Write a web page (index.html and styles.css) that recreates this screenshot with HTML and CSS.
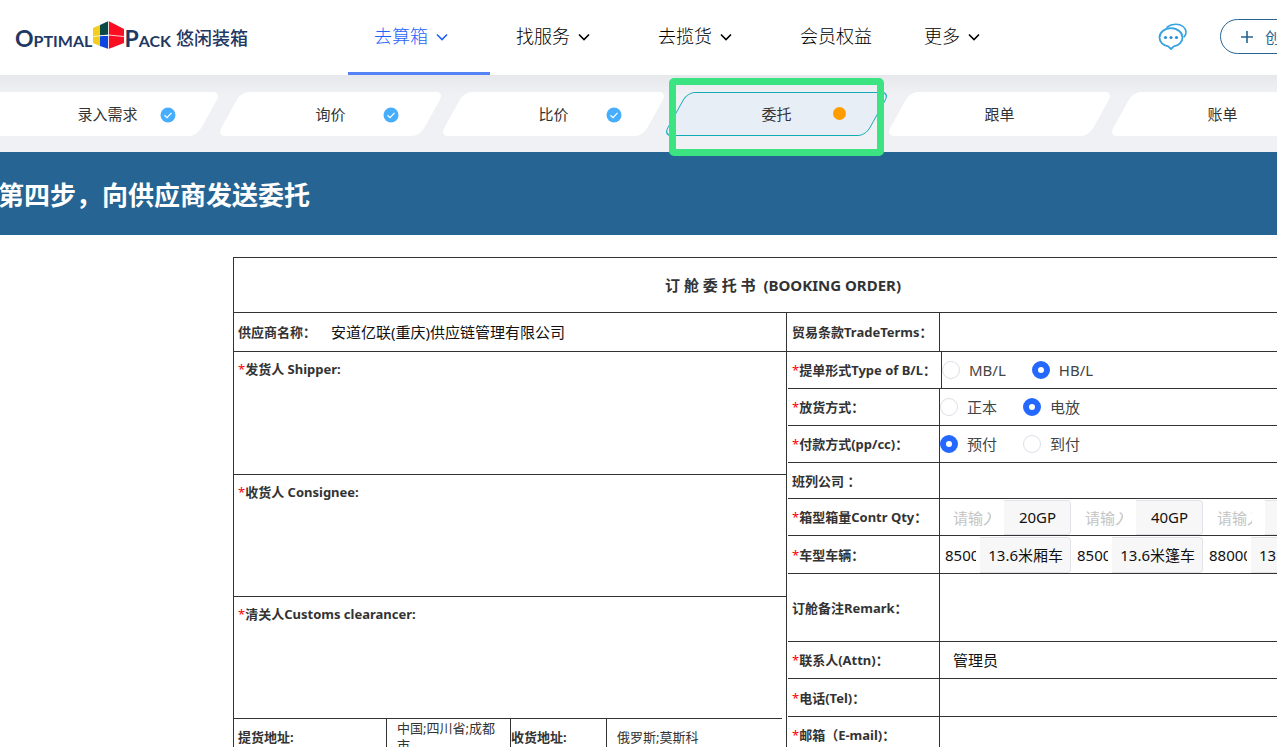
FILE: index.html
```html
<!DOCTYPE html>
<html lang="zh-CN">
<head>
<meta charset="utf-8">
<title>悠闲装箱</title>
<link rel="stylesheet" href="styles.css">
</head>
<body>
<header class="header">
  <a class="logo" href="#">
    <span class="logo-latin">Optimal</span>
    <svg class="logo-mark" viewBox="0 0 31 28" aria-hidden="true">
      <path fill="#f5cd1c" d="M0 7l7-3v21l-7-3z"/>
      <path fill="#0b4a45" d="M7 4l8.500-4v14L7 14.500z"/>
      <path fill="#0c46de" d="M7 15h8.500v13L7 25z"/>
      <path fill="#fb0d22" d="M15.500 0L31 8v14l-15.500 6z"/>
      <path fill="none" stroke="#fff" stroke-width=".8" d="M0 15.500l15.500-1.500L31 15.500M15.500 0v28"/>
    </svg>
    <span class="logo-latin">Pack</span>
    <span class="logo-cn">悠闲装箱</span>
  </a>
  <nav class="nav">
    <a class="nav-item active" href="#">去算箱<svg class="chevron" viewBox="0 0 12 8"><path d="M1 1.500l5 5 5-5"/></svg></a>
    <a class="nav-item" href="#">找服务<svg class="chevron" viewBox="0 0 12 8"><path d="M1 1.500l5 5 5-5"/></svg></a>
    <a class="nav-item" href="#">去揽货<svg class="chevron" viewBox="0 0 12 8"><path d="M1 1.500l5 5 5-5"/></svg></a>
    <a class="nav-item" href="#">会员权益</a>
    <a class="nav-item" href="#">更多<svg class="chevron" viewBox="0 0 12 8"><path d="M1 1.500l5 5 5-5"/></svg></a>
  </nav>
  <div class="actions">
    <svg class="chat" viewBox="0 0 30 28" aria-hidden="true">
      <path fill="none" stroke="#36a3e0" stroke-width="1.600" stroke-linecap="round" d="M9 4.200C14 .500 21 .300 25 3.500c3.800 3 3.700 7.500 1.200 10.300"/>
      <path fill="none" stroke="#36a3e0" stroke-width="1.800" stroke-linejoin="round" d="M13 5.200c6.600 0 11.500 4.200 11.500 9.300 0 4.500-3.700 8-8.700 8.900L13 26l-2.800-2.600C5.200 22.500 1.500 19 1.500 14.500c0-5.100 4.900-9.300 11.500-9.300z"/>
      <g fill="#2a8fd6"><circle cx="7.500" cy="14.500" r="1.600"/><circle cx="13" cy="14.500" r="1.600"/><circle cx="18.500" cy="14.500" r="1.600"/></g>
    </svg>
    <button class="create" type="button"><svg class="plus" viewBox="0 0 12 12"><path d="M6 0v12M0 6h12"/></svg>创</button>
  </div>
</header>

<ol class="steps">
  <li class="step"><span class="step-text">录入需求</span><svg class="state" viewBox="0 0 16 16"><circle cx="8" cy="8" r="7.500"/><path d="M4.500 8.200l2.500 2.400 4.500-4.800"/></svg></li>
  <li class="step"><span class="step-text">询价</span><svg class="state" viewBox="0 0 16 16"><circle cx="8" cy="8" r="7.500"/><path d="M4.500 8.200l2.500 2.400 4.500-4.800"/></svg></li>
  <li class="step"><span class="step-text">比价</span><svg class="state" viewBox="0 0 16 16"><circle cx="8" cy="8" r="7.500"/><path d="M4.500 8.200l2.500 2.400 4.500-4.800"/></svg></li>
  <li class="step current"><span class="step-text">委托</span><span class="dot"></span><span class="highlight"></span></li>
  <li class="step"><span class="step-text">跟单</span></li>
  <li class="step"><span class="step-text">账单</span></li>
</ol>

<h1 class="banner">第四步，向供应商发送委托</h1>

<form class="order">
  <h2 class="order-title">订 舱 委 托 书&nbsp; (BOOKING ORDER)</h2>
  <div class="columns">
    <div class="left">
      <div class="supplier">
        <span class="label">供应商名称：</span>
        <span class="supplier-name">安道亿联(重庆)供应链管理有限公司</span>
      </div>
      <div class="party first"><label class="label" for="shipper"><i>*</i>发货人 Shipper:</label><textarea id="shipper"></textarea></div>
      <div class="party"><label class="label" for="consignee"><i>*</i>收货人 Consignee:</label><textarea id="consignee"></textarea></div>
      <div class="party last"><label class="label" for="customs"><i>*</i>清关人Customs clearancer:</label><textarea id="customs"></textarea></div>
      <div class="addresses">
        <div class="label addr-label">提货地址:</div>
        <div class="addr-value">中国;四川省;成都市</div>
        <div class="label addr-label tight">收货地址:</div>
        <div class="addr-value">俄罗斯;莫斯科</div>
      </div>
    </div>
    <div class="right">
      <div class="row terms"><label class="label" for="terms">贸易条款TradeTerms：</label><div class="field"><input class="text" id="terms"></div></div>
      <div class="rows">
        <div class="row bill"><span class="label"><i>*</i>提单形式Type of B/L：</span><div class="field radios">
          <label class="choice"><input type="radio" name="bl">MB/L</label>
          <label class="choice"><input type="radio" name="bl" checked>HB/L</label></div></div>
        <div class="row"><span class="label"><i>*</i>放货方式：</span><div class="field radios">
          <label class="choice"><input type="radio" name="release">正本</label>
          <label class="choice"><input type="radio" name="release" checked>电放</label></div></div>
        <div class="row"><span class="label"><i>*</i>付款方式(pp/cc)：</span><div class="field radios">
          <label class="choice"><input type="radio" name="pay" checked>预付</label>
          <label class="choice"><input type="radio" name="pay">到付</label></div></div>
        <div class="row short"><label class="label" for="carrier">班列公司 ：</label><div class="field"><input class="text" id="carrier"></div></div>
        <div class="row"><span class="label"><i>*</i>箱型箱量Contr Qty：</span><div class="field groups">
          <label class="group"><input placeholder="请输入"><span class="unit">20GP</span></label>
          <label class="group"><input placeholder="请输入"><span class="unit">40GP</span></label>
          <label class="group"><input placeholder="请输入"><span class="unit wide"></span></label></div></div>
        <div class="row high"><span class="label"><i>*</i>车型车辆：</span><div class="field groups trucks">
          <label class="group"><input value="85000"><span class="unit">13.6米厢车</span></label>
          <label class="group"><input value="85000"><span class="unit">13.6米篷车</span></label>
          <label class="group"><input value="88000"><span class="unit wide">13.6米</span></label></div></div>
        <div class="row tall"><label class="label" for="remark">订舱备注Remark：</label><div class="field"><input class="text" id="remark"></div></div>
        <div class="row"><label class="label" for="attn"><i>*</i>联系人(Attn)：</label><div class="field"><input class="text" id="attn" value="管理员"></div></div>
        <div class="row high"><label class="label" for="tel"><i>*</i>电话(Tel)：</label><div class="field"><input class="text" id="tel"></div></div>
        <div class="row"><label class="label" for="email"><i>*</i>邮箱（E-mail)：</label><div class="field"><input class="text" id="email"></div></div>
      </div>
    </div>
  </div>
</form>
</body>
</html>
```
FILE: styles.css
```css
* { box-sizing: border-box; }
body {
  margin: 0;
  overflow: hidden;
  background: #fff;
  color: #333;
  font: 15px/20px "Noto Sans", "Noto Sans CJK SC", sans-serif;
}
a { color: inherit; text-decoration: none; }
input, textarea, button { font: inherit; color: inherit; }
h1, h2 { margin: 0; }

.header { display: flex; align-items: center; height: 75px; padding-left: 15px; }
.logo { display: flex; align-items: center; width: 333px; flex: none; color: #1f3864; }
.logo-latin { font: 700 23px/28px Lato, sans-serif; font-variant: small-caps; }
.logo-mark { width: 31px; height: 28px; margin: -6px 0 0 1px; }
.logo-cn { margin-left: 5px; font-size: 18px; font-weight: 500; }
.nav { display: flex; align-self: stretch; flex: none; color: #000; font-size: 18px; font-weight: 300; }
.nav-item { display: flex; align-items: center; padding: 0 26px; border-bottom: 3px solid transparent; }
.nav-item.active { color: #1f62fb; border-color: #5583f6; }
.chevron { width: 12px; height: 8px; margin: 2px 16px 0 8px; fill: none; stroke: currentColor; stroke-width: 1.6; }
.actions { display: flex; align-items: center; gap: 32px; margin-left: auto; padding-bottom: 2px; flex: none; width: 119px; }
.chat { width: 30px; height: 28px; flex: none; }
.create {
  display: flex; align-items: center; gap: 12px; flex: none;
  width: 130px; height: 35px; padding: 0 20px;
  border: 1px solid #266493; border-radius: 18px;
  background: #fff; color: #266493;
}
.plus { width: 12px; height: 12px; stroke: currentColor; stroke-width: 1.6; }

.steps {
  display: flex; margin: 0; padding: 17px 0 16px; list-style: none;
  background: linear-gradient(#e7e8ec, #f0f1f5 20px);
}
.step {
  position: relative; z-index: 0; flex: none;
  display: grid; place-items: center;
  width: 223px; height: 44px;
}
.step:first-child { margin-left: -4px; }
.step::before {
  content: ""; position: absolute; z-index: -1; inset: 0 10px;
  border-radius: 8px; background: #fff; transform: skewX(-29deg);
}
.step:first-child::before { left: -30px; }
.step.current { z-index: 1; }
.step.current::before { background: #e7eef6; border: 1px solid #12acb9; }
.step-text { color: #333; }
.state, .dot { position: absolute; top: 15px; right: 43px; width: 16px; height: 16px; }
.state circle { fill: #47aefe; }
.state path { fill: none; stroke: #fff; stroke-width: 1.2; }
.dot { right: 42px; width: 13px; height: 13px; border-radius: 50%; background: #ff9d00; }
.highlight { position: absolute; inset: -14px 4px -20px; border: 7px solid #3be381; border-radius: 5px; }

.banner { padding: 23px 0 20px; background: #266493; color: #fff; font-size: 26px; line-height: 40px; text-indent: -2px; }

.order { width: 1100px; margin: 22px 0 0 233px; border: 1px solid #333; }
.order-title { padding: 17px 0; border-bottom: 1px solid #333; text-align: center; font-size: 15px; line-height: 20px; }
.columns { display: flex; }
.left { width: 553px; border-right: 1px solid #333; }
.right { flex: 1; min-width: 0; }
.label { font-size: 13px; font-weight: 700; line-height: 20px; white-space: nowrap; }
.label i { color: #f00; font-weight: 400; font-style: normal; }

.supplier { display: flex; align-items: center; height: 39px; padding: 0 4px; border-bottom: 1px solid #333; }
.supplier-name { margin-left: 15px; color: #111; }
.party { display: flex; flex-direction: column; height: 122px; padding: 7px 4px; border-bottom: 1px solid #333; }
.party.first { height: 123px; }
.party.last { margin-right: 4px; }
.party textarea { flex: 1; border: 0; resize: none; outline: 0; background: none; }
.addresses { display: grid; grid-template-columns: 153px 124px 96px 1fr; min-height: 36px; }
.addr-label { display: flex; align-items: center; padding-left: 4px; border-right: 1px solid #333; }
.tight { padding-left: 0; }
.addr-value { display: flex; align-items: center; padding: 0 10px; border-right: 1px solid #333; font-size: 13px; line-height: 17px; }
.addr-value:last-child { border: 0; }

.row { display: flex; height: 37px; border-bottom: 1px solid #333; }
.row .label { display: flex; align-items: center; flex: none; min-width: 152px; padding-left: 4px; border-right: 1px solid #333; }
.row.terms { height: 39px; }
.terms .label { min-width: 153px; padding-left: 5px; }
.bill .label { min-width: 154px; }
.rows { padding-left: 1px; }
.row.short { height: 36px; }
.row.high { height: 38px; }
.row.tall { height: 68px; }
.field { display: flex; flex: 1; min-width: 0; overflow: hidden; }
.text { width: 100%; padding: 0 13px; border: 0; outline: 0; background: none; color: #111; }
.radios { align-items: center; gap: 26px; }
.choice { display: flex; align-items: center; gap: 9px; color: #444; }
.choice input { appearance: none; width: 18px; height: 18px; margin: 0; border: 1px solid #dcdfe6; border-radius: 50%; background: #fff; }
.choice input:checked { border: 6px solid #2468ff; }
.groups { gap: 1px; padding-top: 1px; }
.group { display: flex; flex: none; width: 131px; color: #111; }
.group input { flex: 1; min-width: 0; padding: 0 13px; border: 0; outline: 0; background: none; }
.group input::placeholder { color: #c4c4c4; }
.unit {
  display: flex; align-items: center; justify-content: center;
  min-width: 67px; padding: 0 7px 1px 8px; white-space: nowrap;
  border: 1px solid #e2e3e8; border-left: 0; border-radius: 0 4px 4px 0;
  background: #f7f7f7;
}
.unit.wide { min-width: 70px; }
.trucks .group input { padding: 0 4px 0 5px; }
.trucks .unit.wide { min-width: 84px; justify-content: flex-start; }
```
